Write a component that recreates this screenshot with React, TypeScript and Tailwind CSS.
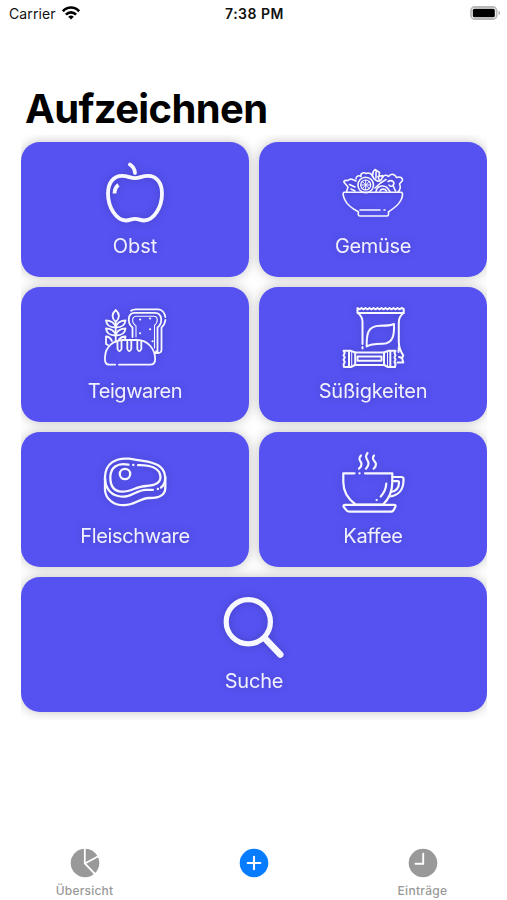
import type { ReactNode } from "react";

interface CategoryCardProps {
  label: string;
  icon: ReactNode;
  strokeWidth?: number;
  wide?: boolean;
  spacing?: string;
}

function CategoryCard({ label, icon, strokeWidth = 2, wide, spacing = "tracking-[-0.35px]" }: CategoryCardProps) {
  return (
    <button
      className={`flex h-[135px] flex-col items-center rounded-[19px] bg-[#5652f2] pt-[18px] ${wide ? "col-span-2" : ""}`}
    >
      <svg
        viewBox="0 0 64 64"
        className="size-16 shrink-0 drop-shadow-[0_0_4px_rgba(0,0,0,0.2)]"
        fill="none"
        stroke="#f7f7ff"
        strokeWidth={strokeWidth}
        strokeLinecap="round"
        strokeLinejoin="round"
      >
        {icon}
      </svg>
      <span className={`mt-[7px] text-[20px] leading-[30px] text-[#f1f0ff] drop-shadow-[0_0_4px_rgba(0,0,0,0.2)] ${spacing}`}>
        {label}
      </span>
    </button>
  );
}

const apple = (
  <>
    <path d="M27 4.5C30 6.5 31.8 9 32 13" />
    <path d="M32 18.2C27 18 25 15.8 19 15.8C10 15.8 5 23.5 5 33.5C5 47 13 60.5 23 60.5C27 60.5 28 58.8 32 58.8C36 58.8 37 60.5 41 60.5C51 60.5 59 47 59 33.5C59 23.5 54 15.8 45 15.8C39 15.8 37 18 32 18.2Z" />
    <path d="M15.5 25C13 26.5 11.7 29.5 11.5 33.5" strokeLinecap="butt" />
  </>
);

const salad = (
  <>
    <path d="M3.5 32.3H60C62.5 32.3 61.5 37 60 40C57 46 52 49 47.5 51.8V54.5Q47.5 56 46 56H19Q17.3 56 17.3 54.5V51.8C12 49 6.5 46 4 40C2.5 37 1 32.3 3.5 32.3Z" />
    <path d="M19 50H39M43 50H44" />
    <path d="M5.5 32L7 27L2.8 22Q3 20 7 20.5Q9 18.5 11.5 19.5L15 21M8.5 24.5L14 27M10 29L14 31" />
    <circle cx="24.7" cy="25" r="7.8" />
    <circle cx="24.7" cy="25" r="5" strokeWidth="1.2" />
    <path d="M24.7 20V30M19.7 25H29.7M21.3 21.5L28.2 28.5M28.2 21.5L21.3 28.5" strokeWidth="1" />
    <path d="M15 19C15 16 18 15 20 16.5C19 14 22 11.5 25 13.5C28 12 31 14 31.5 16.5" />
    <path d="M34 9.5C30 13 31 18.5 35.5 20.5C39 23 42 18 41.5 15.5L38 16.5L38.5 12.5L34 9.5ZM35 12V18M37 16.5L38 19.5" />
    <path d="M42 17C43 14.5 46 15 47.5 16.5C50 13 54 14 55.5 17.5C59 16 62 18 61.5 20.5L58.5 24C60 27 59 30 57 32" />
    <path d="M34 28L39.5 23L45 19.5M47 21.5C51 19 54.5 22.5 52 25.5C50.5 27 48.5 26 48 25M52 25.5L54.5 31" />
    <path d="M35 31.5C36 26 42 24.5 46 27.5L49 31.5M39 31C40 28.5 44 28.5 45.5 31" />
  </>
);

const bread = (
  <>
    <path d="M12.7 5C8.5 9 8.5 13 12.7 17C17 13 17 9 12.7 5ZM12.7 17V37" />
    <path d="M12.7 21.5C10.5 16.5 7.5 15.5 3 15.5C3.5 20.5 7 22.5 12.7 22.5C18.5 22.5 22 20.5 22.5 15.5C18 15.5 15 16.5 12.7 21.5Z" />
    <path d="M12.7 29.5C10.5 24.5 7.5 23.5 3 23.5C3.5 28.5 7 30.5 12.7 30.5C18.5 30.5 22 28.5 22.5 23.5C18 23.5 15 24.5 12.7 29.5Z" />
    <path d="M9 36C7.5 33 5.5 31.5 3 31.5V39L5 40M16 34.5C17.5 32.5 20 31.5 22.5 31.5L22 34" />
    <path d="M29.5 32V22.5C24 18 24.5 8 31.5 7.8H52C59.5 8 60 18 54.5 22.5V46M54.5 46.5H53" />
    <path d="M33 32V21C28.5 18 28.5 11.5 33 11.2H51C55 11.5 55.5 17 51.5 20.5V43" strokeWidth="1.1" />
    <path d="M28 5.8C29.5 4.6 31 4.3 33 4.3H55.5C59 4.5 62 8 62.3 12M62.4 15C62 18 61 20.5 58.5 22.5V44.5Q58.5 48 55 48H52" />
    <path d="M37 14.5H37.2M47 13.5H47.2M47 24.3H47.2M37 28.3H37.2M49.5 36.3H49.7" strokeWidth="2" />
    <path d="M12.2 59.7H6.5C2 59.7 1.8 56 2 52C2.5 41 11 35 21 35H34C45 35 52 44 52.2 54Q52.2 59.7 47 59.7H16" />
    <path d="M14.5 37V44Q16.5 48.5 18.5 44V36M24.3 35V44Q26.3 48.5 28.3 44V35M34.3 35V44Q36.3 48.5 38.3 44V36" />
  </>
);

const candy = (
  <>
    <path d="M16.5 3L18.5 4.3L20.5 3L22.5 4.3L24.5 3L26.5 4.3L28.5 3L30.5 4.3L32.5 3L34.5 4.3L36.5 3L38.5 4.3L40.5 3L42.5 4.3L44.5 3L46.5 4.3L48.5 3L50.5 4.3L52.5 3L54.5 4.3L56.5 3L58.5 4.3L60.5 3L62.7 4V8H16.5Z" />
    <path d="M17 8C20 10.5 21.5 13 21.5 17V39M21.5 42V43.5M62.5 8C59 10.5 57.8 14 57.8 18V37C57.8 43 60 47 62.3 50.5L61 53L62.3 57.5H56.5M57.8 42L57.5 47M58 52L61 53" />
    <path d="M25.7 41.5C25.5 29 26.5 21 39 20.8C45 20.8 50 20.5 53 19C53.5 30 52 38.5 42 38.8C34 39 29.5 39 25.7 41.5Z" />
    <path d="M2.5 45.8H10L14 47.5H43L47 45.8H54.5L53.5 48L54.5 50.2L53.5 52.4L54.5 54.6L53.5 56.8L54.5 59L54 62H47L43 60H14L10 62H3L2.5 59.5L3.8 57L2.5 54.8L3.8 52.5L2.5 50.2L3.8 48Z" />
    <path d="M8 46V61.7M14.2 47.5V60M43 47.5V60M49.3 46V61.7" />
    <path d="M10.7 47V61M46.5 47V61" strokeWidth="1" />
    <rect x="16.5" y="51.5" width="24" height="4.2" />
  </>
);

const steak = (
  <>
    <path d="M50 39.8H43C32 40 28 49 15 46C6 44 1.7 36 2 27C2.5 13 13 7.5 26 8.7C31 9.2 34 10 40 10.8C52 12.5 61 16 62 26C62.5 31 61 35.5 58 37.5M54.8 39H55M30.2 15H30.4" />
    <path d="M25.5 14.7C14 12 7.5 18 7.3 27C7.3 36 11 41.5 19 41.7C28 42 33 36.5 43 36C52 35.5 57.5 33 57.5 27C57 18 47 14.8 35 15.2" />
    <path d="M2 28V40C2.5 49 11 55.5 21 55.2C32 55 36 48.5 46 48C54 48.2 62 46.5 62.3 38V27" />
    <circle cx="22" cy="24" r="5.2" />
  </>
);

const coffee = (
  <>
    <path d="M13.5 23.3H2.3V32C2.3 42 7 49 14.5 54.5H42C48 49 51.3 42 51.3 32V23.3H24M18.4 23.3H18.6" />
    <path d="M4 54.8H53Q55 54.8 54.5 56.5L53 59.5Q52 61.7 49.5 61.7H8.5Q6 61.7 4.8 59.5L2.5 56.5Q2.3 54.8 4 54.8Z" />
    <path d="M51.5 27H60.5Q62.5 27 62.5 29V31C62.3 39 58 45.5 48.5 46.5M51.3 31.2H56.5Q58 31.2 58 32.5C58 37.5 55.5 41 50 42" />
    <path d="M45.3 33.5C45 39 43 43 39.7 46.5M35.6 50H35.8" />
    <path d="M20 5.5C16 10 20.5 10.5 20.5 14C20.5 16 19.5 17.5 18 18.7M26.5 3C22.5 8 27.5 9.5 27.5 13.5C27.5 16 26 17.5 25 18.7M33 5.5C29.5 10 35 11 35 14C35 16 34 17.5 32.7 18.7" />
  </>
);

const search = (
  <>
    <circle cx="26.3" cy="26.7" r="22.1" strokeWidth="5.2" />
    <path d="M43 43.5L58.2 59.5" strokeWidth="6.6" />
  </>
);

function StatusBar() {
  return (
    <header className="grid h-[26px] grid-cols-3 items-center pl-[9px] pr-[6px] text-[14px] text-[#111]">
      <div className="flex items-center gap-[6px]">
        <span className="tracking-[0.1px]">Carrier</span>
        <svg viewBox="0 0 18 14" className="h-[14px] w-[18px]" fill="none" stroke="#000" strokeWidth="2.6">
          <path d="M.9 5.3C5.5.3 12.5.3 17.1 5.3M3.9 8.6C6.8 5.6 11.2 5.6 14.1 8.6" />
          <path d="M9 13.5L6.2 10.7Q9 8.5 11.8 10.7Z" fill="#000" stroke="none" />
        </svg>
      </div>
      <span className="-ml-px text-center font-semibold tracking-[0.5px]">7:38 PM</span>
      <svg viewBox="0 0 31 14" className="h-[14px] w-[31px] justify-self-end">
        <rect x="1" y="1" width="25.6" height="12" rx="3.6" fill="#fff" stroke="#b9b9b9" strokeWidth="1.8" />
        <rect x="2.8" y="2.7" width="22" height="8.6" rx="1.6" fill="#000" />
        <path d="M28.5 4.8C30.7 5.5 30.7 8.5 28.5 9.2Z" fill="#b3b3b3" />
      </svg>
    </header>
  );
}

function TabBar() {
  return (
    <nav className="mt-auto grid h-[52px] grid-cols-3 text-[12px] font-medium leading-[14px] text-[#999]">
      <div className="flex flex-col items-center gap-[6px]">
        <svg viewBox="0 0 30 30" className="size-[30px]">
          <circle cx="15" cy="15" r="14.3" fill="#999" />
          <path d="M14.8 0V15.5L25.5 26.5M14.8 15.5L28.8 8" fill="none" stroke="#fff" strokeWidth="1.8" />
        </svg>
        <span className="tracking-[0.2px]">Übersicht</span>
      </div>
      <div className="flex flex-col items-center">
        <svg viewBox="0 0 30 30" className="size-[30px]">
          <circle cx="15" cy="15" r="14.3" fill="#087cff" />
          <path d="M15 8.7V21.3M8.7 15H21.3" stroke="#fff" strokeWidth="2.1" strokeLinecap="round" />
        </svg>
      </div>
      <div className="flex flex-col items-center gap-[6px]">
        <svg viewBox="0 0 30 30" className="size-[30px]">
          <circle cx="15" cy="15" r="14.3" fill="#999" />
          <path d="M15.2 5.8V15.7H7.5" fill="none" stroke="#fff" strokeWidth="1.9" strokeLinecap="round" />
        </svg>
        <span className="tracking-[0.3px]">Einträge</span>
      </div>
    </nav>
  );
}

export default function App() {
  return (
    <div className="flex h-[900px] w-[507px] flex-col overflow-hidden bg-white font-['Inter',sans-serif]">
      <StatusBar />
      <h1 className="mt-[58px] pl-[25px] text-[40px] font-bold leading-[50px] tracking-[-0.65px] text-black">
        Aufzeichnen
      </h1>
      {/* one shadow for the whole grid, cut off at its left and right edges */}
      <main className="ml-[21px] mr-[20px] mt-[8.4px] grid grid-cols-2 gap-[10px] drop-shadow-[0_0_6px_rgba(0,0,0,0.24)] [clip-path:inset(-8px_0px)]">
        <CategoryCard label="Obst" icon={apple} strokeWidth={3.8} spacing="tracking-normal" />
        <CategoryCard label="Gemüse" icon={salad} strokeWidth={1.6} />
        <CategoryCard label="Teigwaren" icon={bread} strokeWidth={1.8} spacing="tracking-[-0.45px]" />
        <CategoryCard label="Süßigkeiten" icon={candy} spacing="tracking-[-0.2px]" />
        <CategoryCard label="Fleischware" icon={steak} strokeWidth={2.3} />
        <CategoryCard label="Kaffee" icon={coffee} strokeWidth={2.2} />
        <CategoryCard label="Suche" icon={search} wide spacing="tracking-[-0.2px]" />
      </main>
      <TabBar />
    </div>
  );
}
